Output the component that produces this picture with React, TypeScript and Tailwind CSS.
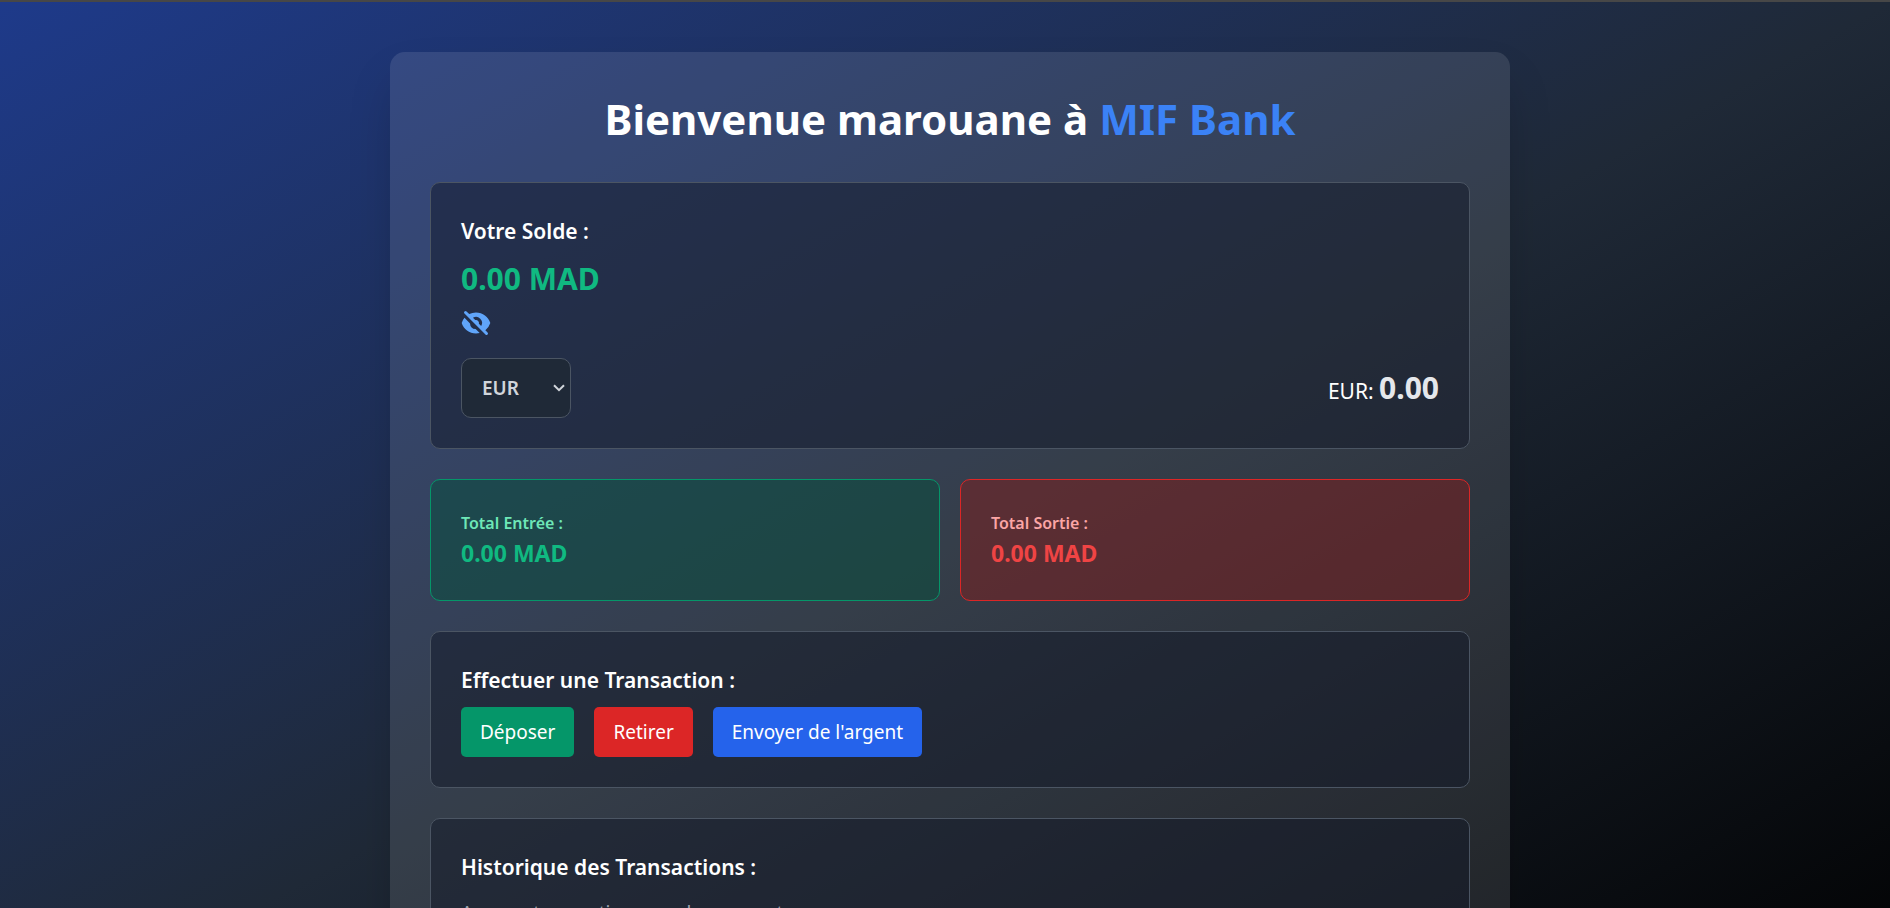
import { useState } from "react";
import { HiEye, HiEyeOff } from "react-icons/hi";

const panel = "rounded-[10px] border border-[#4b5563] bg-[#111827]/50 p-[30px]";
const heading = "mb-2 text-[21px] leading-[37px] font-semibold text-white";
const action = "h-[50px] rounded-[5px] px-[19px] text-[19px] leading-[30px] text-white";

export default function App() {
  const [visible, setVisible] = useState(true);
  const [currency, setCurrency] = useState("EUR");

  return (
    <div className="min-h-screen border-t-2 border-[#474747] font-['Noto_Sans','Open_Sans',sans-serif]">
      <div className="min-h-screen bg-linear-to-br/srgb from-[#1e3a8a] via-[#1f2937] to-black py-[50px] pr-10 pl-[50px]">
        <main className="mx-auto max-w-[1120px] rounded-[15px] bg-white/10 p-10 shadow-2xl">
          <h1 className="mb-9 text-center text-[42px] leading-[54px] font-bold text-white">
            Bienvenue marouane à <span className="text-[#3b82f6]">MIF Bank</span>
          </h1>

          <section className={panel}>
            <h2 className={heading}>Votre Solde :</h2>
            <p className="mb-2 text-[30px] leading-[42px] font-bold text-[#10b981]">
              {visible ? "0.00 MAD" : "****"}
            </p>
            <button
              type="button"
              aria-label="Afficher ou masquer le solde"
              className="mb-5 block text-[#60a5fa]"
              onClick={() => setVisible(!visible)}
            >
              {visible ? <HiEyeOff size={30} /> : <HiEye size={30} />}
            </button>
            <div className="flex items-center justify-between">
              <div className="relative">
                <select
                  aria-label="Devise"
                  value={currency}
                  onChange={(e) => setCurrency(e.target.value)}
                  className="block h-[60px] w-[110px] appearance-none rounded-[10px] border border-[#4b5563] bg-[#1f2937] pl-5 text-[19px] font-semibold text-[#d1d5db]"
                >
                  <option>EUR</option>
                  <option>USD</option>
                  <option>GBP</option>
                </select>
                <svg
                  viewBox="0 0 12 8"
                  aria-hidden="true"
                  className="pointer-events-none absolute top-[26px] right-1.5 h-2 w-3 fill-none stroke-[#d1d5db] stroke-2"
                >
                  <path d="M1 1.2 6 6.2 11 1.2" />
                </svg>
              </div>
              <p className="pt-0.5 text-[21px] leading-10 text-white">
                {currency}: <span className="text-[30px] font-bold text-[#e5e7eb]">0.00</span>
              </p>
            </div>
          </section>

          <div className="my-[30px] grid grid-cols-2 gap-5">
            <section className="rounded-[10px] border border-[#059669] bg-[#064e3b]/50 p-[30px]">
              <h3 className="text-[16px] leading-[27px] font-semibold text-[#6ee7b7]">Total Entrée :</h3>
              <p className="text-[23px] leading-[33px] font-bold text-[#10b981]">0.00 MAD</p>
            </section>
            <section className="rounded-[10px] border border-[#dc2626] bg-[#7f1d1d]/50 p-[30px]">
              <h3 className="text-[16px] leading-[27px] font-semibold text-[#fca5a5]">Total Sortie :</h3>
              <p className="text-[23px] leading-[33px] font-bold text-[#ef4444]">0.00 MAD</p>
            </section>
          </div>

          <section className={panel}>
            <h2 className={heading}>Effectuer une Transaction :</h2>
            <div className="flex gap-5">
              <button type="button" className={`${action} bg-[#059669]`}>Déposer</button>
              <button type="button" className={`${action} bg-[#dc2626]`}>Retirer</button>
              <button type="button" className={`${action} bg-[#2563eb]`}>Envoyer de l'argent</button>
            </div>
          </section>

          <section className={`${panel} mt-[30px]`}>
            <h2 className={heading}>Historique des Transactions :</h2>
            <p className="pt-1 text-[19px] leading-[30px] text-[#9ca3af]">Aucune transaction pour le moment.</p>
          </section>
        </main>
      </div>
    </div>
  );
}
